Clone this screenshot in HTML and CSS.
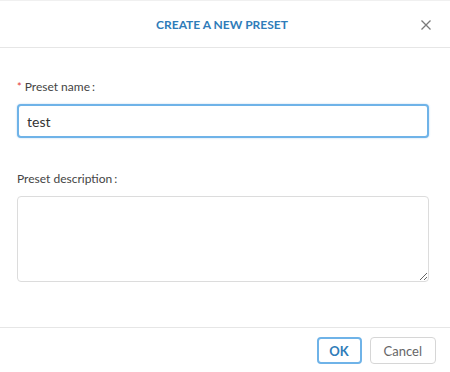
FILE: index.html
```html
<!DOCTYPE html>
<html lang="en">
<head>
    <meta charset="UTF-8">
    <meta name="viewport" content="width=device-width, initial-scale=1.0">
    <title>Create a new preset</title>
    <link rel="stylesheet" href="styles.css">
</head>
<body>
    <div class="modal">
        <div class="modal-header">
            <h1 class="modal-title">Create a new preset</h1>
            <button class="close-button" aria-label="Close">
                <svg width="10" height="10" viewBox="0 0 10 10">
                    <path d="M0.5 0.5 L9.5 9.5 M9.5 0.5 L0.5 9.5" stroke="#7a7a7a" stroke-width="1.3" fill="none"/>
                </svg>
            </button>
        </div>

        <div class="modal-body">
            <div class="field">
                <label class="field-label required" for="presetName">Preset name<span class="colon">:</span></label>
                <input id="presetName" class="text-input" type="text" value="test">
            </div>
            <div class="field">
                <label class="field-label" for="presetDescription">Preset description<span class="colon">:</span></label>
                <textarea id="presetDescription" class="text-area"></textarea>
            </div>
        </div>

        <div class="modal-footer">
            <button class="btn btn-primary">OK</button>
            <button class="btn">Cancel</button>
        </div>
    </div>
</body>
</html>
```

FILE: styles.css
```css
body {
    font-family: Lato, "Open Sans", Arial, sans-serif;
    margin: 0;
    padding: 0;
    background-color: white;
    color: #444;
}
.modal {
    width: 450px;
    border-top: 1px solid #f0f0f0;
}
.modal-header {
    height: 46px;
    border-bottom: 1px solid #e6e6e6;
    display: flex;
    align-items: center;
    justify-content: center;
    position: relative;
}
.modal-title {
    margin: 0 6px 0 0;
    font-size: 12px;
    font-weight: 700;
    text-transform: uppercase;
    color: #2f7cb9;
    letter-spacing: 0;
}
.close-button {
    position: absolute;
    right: 19px;
    top: 19px;
    background: none;
    border: none;
    padding: 0;
    width: 10px;
    height: 10px;
    cursor: pointer;
}
.close-button svg {
    display: block;
}
.modal-body {
    padding: 31px 21px 0 17px;
    height: 279px;
    box-sizing: border-box;
}
.field {
    margin-bottom: 33px;
}
.field-label {
    display: block;
    font-size: 12px;
    line-height: 16px;
    color: #444;
    margin-bottom: 9px;
}
.field-label.required::before {
    content: "*";
    color: #e53935;
    font-size: 11px;
    margin-right: 3px;
}
.colon {
    margin-left: 2px;
}
.text-input {
    display: block;
    width: 412px;
    height: 34px;
    box-sizing: border-box;
    border: 2px solid #6fb3e8;
    border-radius: 4px;
    padding: 0 8px;
    font-family: inherit;
    font-size: 14px;
    color: #333;
    outline: none;
    box-shadow: 0 0 2px rgba(70, 150, 220, 0.4);
}
.text-area {
    display: block;
    width: 412px;
    height: 86px;
    box-sizing: border-box;
    border: 1px solid #dcdcdc;
    border-radius: 4px;
    padding: 6px 8px;
    font-family: inherit;
    font-size: 14px;
    resize: both;
    margin: 0;
}
.modal-footer {
    border-top: 1px solid #e6e6e6;
    display: flex;
    justify-content: flex-end;
    gap: 8px;
    padding: 9px 14px 0 0;
    height: 45px;
}
.btn {
    height: 27px;
    padding: 0 13px;
    background-color: white;
    border: 1px solid #d6d6d6;
    border-radius: 4px;
    font-family: inherit;
    font-size: 13px;
    color: #666;
    cursor: pointer;
}
.btn-primary {
    width: 45px;
    padding: 0;
    border: 2px solid #6fb3e8;
    color: #2f7cb9;
    font-weight: 700;
}
```
